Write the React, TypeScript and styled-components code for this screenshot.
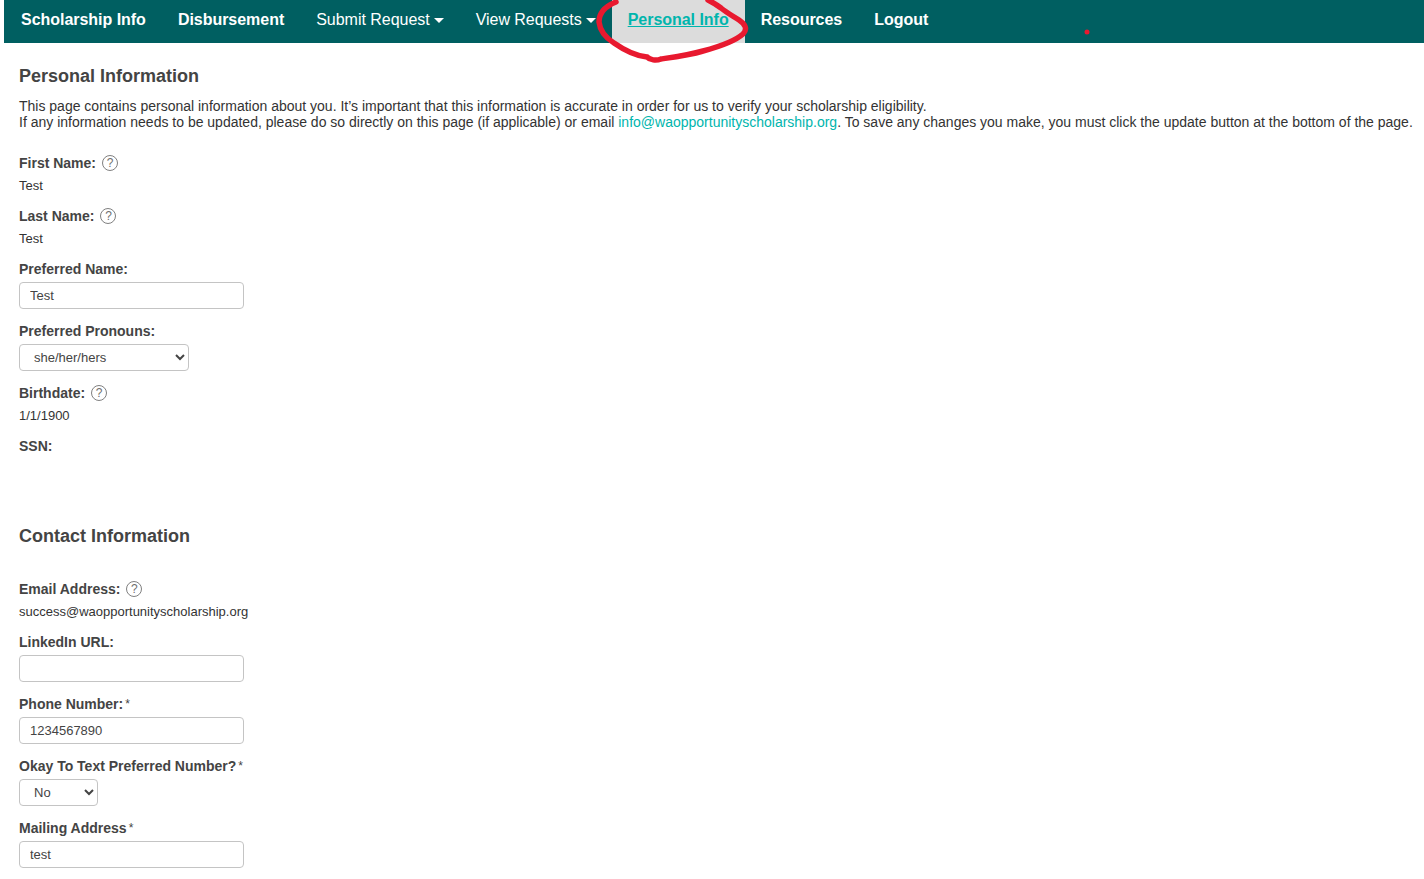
import React from "react";
import styled, { createGlobalStyle } from "styled-components";

const GlobalStyle = createGlobalStyle`
  html, body {
    margin: 0;
    padding: 0;
    height: 879px;
    overflow: hidden;
    background: #fff;
  }
  body {
    font-family: "Liberation Sans", Arial, sans-serif;
    font-size: 14px;
    color: #333;
  }
`;

const Page = styled.div`
  position: relative;
  padding-left: 4px;
`;

const Nav = styled.nav`
  display: flex;
  align-items: stretch;
  height: 43px;
  padding-left: 1px;
  background: #005f61;
  letter-spacing: -0.03px;
`;

const NavLink = styled.a<{ $active?: boolean; $plain?: boolean }>`
  display: flex;
  align-items: center;
  gap: 4px;
  padding: 0 16px 3px;
  font-size: 16px;
  font-weight: ${(p) => (p.$plain ? 400 : 700)};
  color: ${(p) => (p.$active ? "#00b5ad" : "#fff")};
  background: ${(p) => (p.$active ? "#dcdcdc" : "transparent")};
  text-decoration: ${(p) => (p.$active ? "underline" : "none")};
  cursor: pointer;
`;

const Caret = styled.span`
  width: 0;
  height: 0;
  border-top: 5px solid #fff;
  border-left: 5px solid transparent;
  border-right: 5px solid transparent;
`;

const Markup = styled.svg`
  position: absolute;
  top: 0;
  left: 0;
  pointer-events: none;
`;

const Content = styled.main`
  padding: 21px 0 0 15px;
`;

const Heading = styled.h2<{ $contact?: boolean }>`
  margin: ${(p) => (p.$contact ? "47px 0 31px" : "0 0 10px")};
  font-size: 18px;
  line-height: 24px;
  font-weight: 700;
  color: #444;
`;

const Intro = styled.p`
  margin: 0 0 23px;
  font-size: 14px;
  line-height: 16px;
  color: #333;
  white-space: nowrap;
`;

const MailLink = styled.a`
  color: #00b5ad;
  text-decoration: none;
`;

const Field = styled.div`
  margin-bottom: 12px;
`;

const LabelRow = styled.div`
  display: flex;
  align-items: center;
  gap: 6px;
  height: 20px;
  margin-bottom: 3px;
`;

const Label = styled.label`
  font-size: 14px;
  font-weight: 700;
  color: #444;
`;

const Required = styled.span`
  margin-left: 2px;
  font-weight: 400;
  font-size: 12px;
  vertical-align: 1px;
`;

const Help = styled.span`
  display: flex;
  align-items: center;
  justify-content: center;
  box-sizing: border-box;
  width: 16px;
  height: 16px;
  border: 1px solid #808080;
  border-radius: 50%;
  font-size: 12px;
  line-height: 1;
  color: #707070;
`;

const Value = styled.div`
  min-height: 18px;
  margin-bottom: -1px;
  padding-top: 1px;
  font-size: 13px;
  line-height: 18px;
  color: #333;
`;

const TextInput = styled.input`
  display: block;
  box-sizing: border-box;
  width: 225px;
  height: 27px;
  padding: 0 10px;
  border: 1px solid #c4c4c4;
  border-radius: 4px;
  background: #fff;
  font-family: inherit;
  font-size: 13px;
  color: #444;
  outline: none;
`;

const Select = styled.select<{ $width: number }>`
  display: block;
  box-sizing: border-box;
  width: ${(p) => p.$width}px;
  height: 27px;
  padding: 0 0 0 10px;
  border: 1px solid #c4c4c4;
  border-radius: 4px;
  background: #fff;
  font-family: inherit;
  font-size: 13px;
  color: #444;
  outline: none;
`;

const TextField = ({ label, value, help }: { label: string; value?: string; help?: boolean }) => (
  <Field>
    <LabelRow>
      <Label>{label}</Label>
      {help && <Help>?</Help>}
    </LabelRow>
    <Value>{value}</Value>
  </Field>
);

const InputField = ({ label, value, required }: { label: string; value: string; required?: boolean }) => (
  <Field>
    <LabelRow>
      <Label>
        {label}
        {required && <Required>*</Required>}
      </Label>
    </LabelRow>
    <TextInput defaultValue={value} />
  </Field>
);

const SelectField = ({ label, value, width, required }: { label: string; value: string; width: number; required?: boolean }) => (
  <Field>
    <LabelRow>
      <Label>
        {label}
        {required && <Required>*</Required>}
      </Label>
    </LabelRow>
    <Select $width={width} defaultValue={value}>
      <option>{value}</option>
    </Select>
  </Field>
);

export default function App() {
  return (
    <Page>
      <GlobalStyle />
      <Nav>
        <NavLink>Scholarship Info</NavLink>
        <NavLink>Disbursement</NavLink>
        <NavLink $plain>
          Submit Request
          <Caret />
        </NavLink>
        <NavLink $plain>
          View Requests
          <Caret />
        </NavLink>
        <NavLink $active>Personal Info</NavLink>
        <NavLink>Resources</NavLink>
        <NavLink>Logout</NavLink>
      </Nav>
      <Content>
        <Heading>Personal Information</Heading>
        <Intro>
          This page contains personal information about you. It’s important that this information is accurate in order for us to verify your scholarship eligibility.
          <br />
          If any information needs to be updated, please do so directly on this page (if applicable) or email{" "}
          <MailLink>info@waopportunityscholarship.org</MailLink>. To save any changes you make, you must click the update button at the bottom of the page.
        </Intro>
        <TextField label="First Name:" value="Test" help />
        <TextField label="Last Name:" value="Test" help />
        <InputField label="Preferred Name:" value="Test" />
        <SelectField label="Preferred Pronouns:" value="she/her/hers" width={170} />
        <TextField label="Birthdate:" value="1/1/1900" help />
        <TextField label="SSN:" />
        <Heading $contact>Contact Information</Heading>
        <TextField label="Email Address:" value="success@waopportunityscholarship.org" help />
        <InputField label="LinkedIn URL:" value="" />
        <InputField label="Phone Number:" value="1234567890" required />
        <SelectField label="Okay To Text Preferred Number?" value="No" width={79} required />
        <InputField label="Mailing Address" value="test" required />
      </Content>
      <Markup width="1424" height="70" viewBox="0 0 1424 70">
        <path
          d="M616 2 C606 6 599 13 599 22 C600 31 606 38 614 43 C624 50 636 56 647 57 C650 60 656 61 661 59 C675 57 690 55 703 51 C718 47 734 42 743 34 C748 29 745 24 739 20 C733 16 727 13 721 8 C717 5 712 2 708 0"
          fill="none"
          stroke="#e8192f"
          strokeWidth="5.5"
          strokeLinecap="round"
        />
        <circle cx="1087" cy="32" r="2.5" fill="#e8192f" />
      </Markup>
    </Page>
  );
}
